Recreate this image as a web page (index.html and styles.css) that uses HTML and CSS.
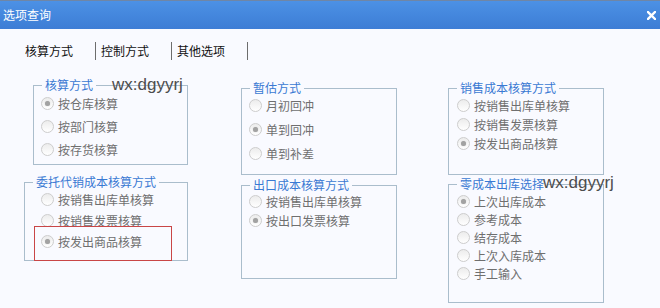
FILE: index.html
```html
<!DOCTYPE html>
<html lang="zh">
<head>
<meta charset="utf-8">
<title>选项查询</title>
<link rel="stylesheet" href="styles.css">
</head>
<body>
<div class="titlebar">
  <span class="title">选项查询</span>
  <svg class="close" width="9" height="9" viewBox="0 0 9 9"><path d="M1 1 L8 8 M8 1 L1 8" stroke="#fff" stroke-width="2.4" stroke-linecap="square"/></svg>
</div>
<div class="tabs">
  <span class="tab">核算方式</span>
  <span class="tab">控制方式</span>
  <span class="tab">其他选项</span>
</div>
<div class="columns">
  <div class="col col1">
    <div class="group g1">
      <span class="legend">核算方式</span>
      <div class="rows">
        <div class="row"><span class="radio on"></span>按仓库核算</div>
        <div class="row"><span class="radio"></span>按部门核算</div>
        <div class="row"><span class="radio"></span>按存货核算</div>
      </div>
      <span class="wm wm1">wx:dgyyrj</span>
    </div>
    <div class="group g2">
      <span class="legend">委托代销成本核算方式</span>
      <div class="rows">
        <div class="row"><span class="radio"></span>按销售出库单核算</div>
        <div class="row"><span class="radio"></span>按销售发票核算</div>
        <div class="row"><span class="radio on"></span>按发出商品核算</div>
      </div>
      <span class="mark"></span>
    </div>
  </div>
  <div class="col col2">
    <div class="group g3">
      <span class="legend">暂估方式</span>
      <div class="rows">
        <div class="row"><span class="radio"></span>月初回冲</div>
        <div class="row"><span class="radio on"></span>单到回冲</div>
        <div class="row"><span class="radio"></span>单到补差</div>
      </div>
    </div>
    <div class="group g4">
      <span class="legend">出口成本核算方式</span>
      <div class="rows">
        <div class="row"><span class="radio"></span>按销售出库单核算</div>
        <div class="row"><span class="radio on"></span>按出口发票核算</div>
      </div>
    </div>
  </div>
  <div class="col col3">
    <div class="group g5">
      <span class="legend">销售成本核算方式</span>
      <div class="rows">
        <div class="row"><span class="radio"></span>按销售出库单核算</div>
        <div class="row"><span class="radio"></span>按销售发票核算</div>
        <div class="row"><span class="radio on"></span>按发出商品核算</div>
      </div>
    </div>
    <div class="group g6">
      <span class="legend">零成本出库选择</span>
      <div class="rows">
        <div class="row"><span class="radio on"></span>上次出库成本</div>
        <div class="row"><span class="radio"></span>参考成本</div>
        <div class="row"><span class="radio"></span>结存成本</div>
        <div class="row"><span class="radio"></span>上次入库成本</div>
        <div class="row"><span class="radio"></span>手工输入</div>
      </div>
      <span class="wm wm2">wx:dgyyrj</span>
    </div>
  </div>
</div>
</body>
</html>
```

FILE: styles.css
```css
* { box-sizing: border-box; }
html, body { margin: 0; padding: 0; }
body {
  width: 660px;
  height: 308px;
  overflow: hidden;
  background: #f9faff;
  font-family: "Noto Sans CJK SC", "Noto Sans", sans-serif;
  font-size: 12px;
}
.titlebar {
  height: 29px;
  border-top: 1px solid #6f86a6;
  background: linear-gradient(#4c91e5, #3d7dd5);
  display: flex;
  align-items: center;
  justify-content: space-between;
  padding: 0 4px 0 3px;
}
.title {
  color: #fff;
  line-height: 28px;
  font-size: 12px;
}
.close { display: block; }
.tabs {
  display: flex;
  margin-top: 13px;
  padding-left: 20px;
  height: 18px;
}
.tab {
  color: #111;
  line-height: 18px;
  padding: 0 22px 0 5px;
  border-right: 1px solid #6d6d6d;
}
.tab:first-child { padding-left: 5px; }
.columns {
  display: flex;
  align-items: flex-start;
  margin-top: 25px;
}
.col {
  display: flex;
  flex-direction: column;
}
.col1 { margin-left: 24px; width: 164px; gap: 17px; }
.col2 { margin-left: 53px; width: 156px; gap: 10px; margin-top: 3px; }
.col3 { margin-left: 51px; width: 156px; gap: 9px; margin-top: 3px; }
.group {
  position: relative;
  border: 1px solid #aabdcc;
  display: flex;
  flex-direction: column;
}
.legend {
  align-self: flex-start;
  margin: -8px 0 0 8px;
  padding: 0 3px;
  height: 14px;
  line-height: 14px;
  color: #3a79d3;
  background: #f9faff;
  white-space: nowrap;
}
.rows {
  display: flex;
  flex-direction: column;
}
.row {
  display: flex;
  align-items: center;
  color: #6f6f6f;
  white-space: nowrap;
}
.radio {
  width: 13px;
  height: 13px;
  margin-right: 4px;
  border-radius: 50%;
  border: 1px solid #cdcdcd;
  background: linear-gradient(#ececec, #ffffff);
  display: flex;
  align-items: center;
  justify-content: center;
  flex: none;
}
.radio.on::after {
  content: "";
  width: 5px;
  height: 5px;
  border-radius: 50%;
  background: #a2a2a2;
  box-shadow: 0 0 1px #bbb;
}
.g1 { margin-left: 9px; height: 80px; }
.g1 .rows { padding: 1px 0 0 7px; gap: 3px; }
.g1 .row { height: 20px; }
.g2 { height: 79px; }
.g2 .rows { padding: 0 0 0 16px; gap: 1px; }
.g2 .row { height: 20px; }
.g3 { height: 87px; }
.g3 .rows { padding: 0 0 0 7px; gap: 4px; }
.g3 .row { height: 20px; }
.g4 { height: 94px; }
.g4 .rows { padding: 0 0 0 7px; gap: 1px; }
.g4 .row { height: 18px; }
.g5 { height: 87px; }
.g5 .rows { padding: 1px 0 0 8px; gap: 1px; }
.g5 .row { height: 18px; }
.g6 { height: 119px; }
.g6 .rows { padding: 2px 0 0 8px; gap: 1px; }
.g6 .row { height: 17px; }
.wm {
  position: absolute;
  font-family: "Liberation Sans", Arial, sans-serif;
  font-size: 17px;
  line-height: 20px;
  color: #4d4d4d;
  white-space: nowrap;
}
.wm1 { left: 78px; top: -11px; }
.wm2 { left: 94px; top: -12px; }
.mark {
  position: absolute;
  left: 9px;
  top: 43px;
  width: 138px;
  height: 35px;
  border: 1px solid #c94646;
}
```
